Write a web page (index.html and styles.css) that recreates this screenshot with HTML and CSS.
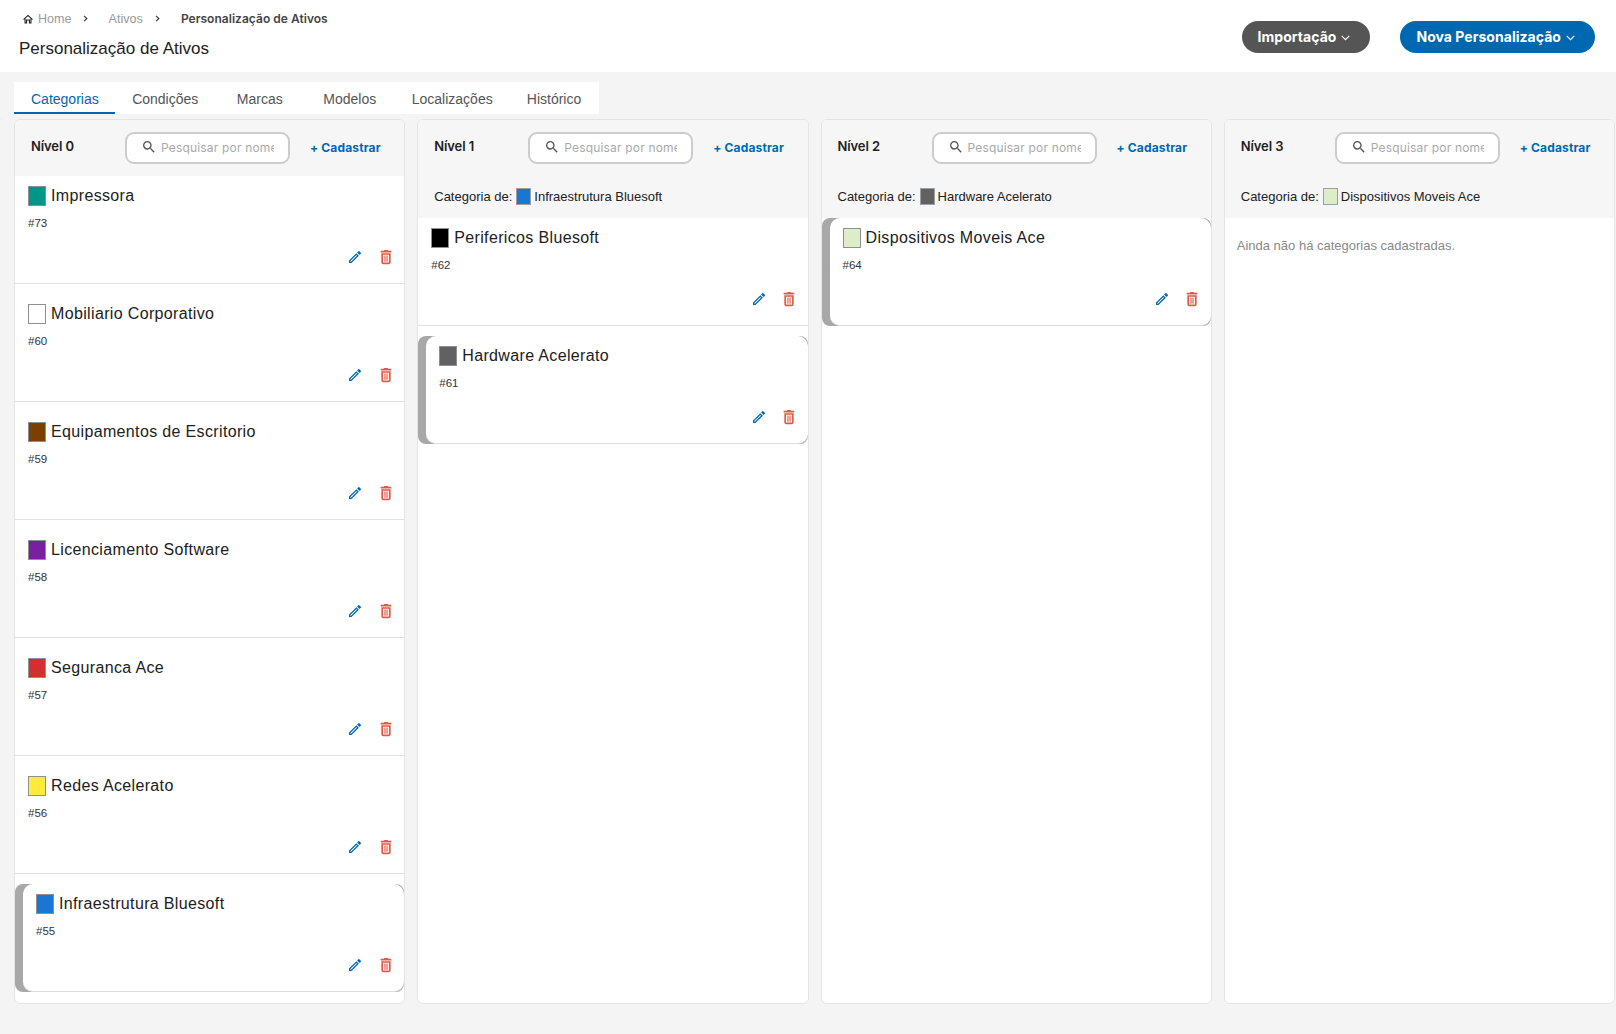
FILE: index.html
```html
<!DOCTYPE html>
<html lang="pt-BR">
  <head>
    <meta charset="UTF-8" />
    <title>Personalização de Ativos</title>
    <link rel="stylesheet" href="styles.css">
  </head>
  <body>
    <svg class="icon-defs" width="0" height="0">
      <symbol id="i-edit" viewBox="0 0 24 24"><path d="M3 17.25V21h3.75L17.81 9.94l-3.75-3.75L3 17.25zM5.92 19H5v-.92l9.06-9.06.92.92L5.92 19zM20.71 7.04a1 1 0 0 0 0-1.41l-2.34-2.34a1 1 0 0 0-1.41 0l-1.83 1.83 3.75 3.75 1.83-1.83z"/></symbol>
      <symbol id="i-trash" viewBox="0 0 24 24"><path d="M15.5 2.5l-1-1h-5l-1 1H4v2.6h16V2.5h-4.5zM5 6.2V20c0 1.66 1.34 3 3 3h8c1.66 0 3-1.34 3-3V6.2H5zm11.4 14H7.6V8.8h8.8v11.4zM9.6 9.8h1.7v9.2H9.6zm3.1 0h1.7v9.2h-1.7z"/></symbol>
      <symbol id="i-search" viewBox="0 0 24 24"><path d="M15.5 14h-.79l-.28-.27A6.47 6.47 0 0 0 16 9.5 6.5 6.5 0 1 0 9.5 16c1.61 0 3.09-.59 4.23-1.57l.27.28v.79l5 4.99L20.49 19l-4.99-5zm-6 0C7.01 14 5 11.99 5 9.5S7.01 5 9.5 5 14 7.01 14 9.5 11.99 14 9.5 14z"/></symbol>
      <symbol id="i-down" viewBox="0 0 24 24"><path d="M5 9l7 7 7-7" fill="none" stroke="currentColor" stroke-width="2.2"/></symbol>
      <symbol id="i-next" viewBox="0 0 24 24"><path d="M8 5l7.5 7L8 19" fill="none" stroke="currentColor" stroke-width="3"/></symbol>
    </svg>

    <header class="top-bar">
      <div class="top-left">
        <nav class="crumbs">
          <svg class="home-icon" viewBox="0 0 24 24"><path d="M12 3.5L1.5 12.8H5V21h5.2v-6h3.6v6H19v-8.2h3.5L12 3.5zM16.8 18.8h-.8v-6H8v6h-.8v-8.2L12 6.4l4.8 4.2z"/></svg>
          <span class="crumb crumb-home">Home</span>
          <svg class="crumb-sep"><use href="#i-next"/></svg>
          <span class="crumb crumb-mid">Ativos</span>
          <svg class="crumb-sep"><use href="#i-next"/></svg>
          <span class="crumb-current">Personalização de Ativos</span>
        </nav>
        <h1 class="page-title">Personalização de Ativos</h1>
      </div>
      <div class="top-actions">
        <button class="pill-btn pill-gray">Importação <svg class="pill-caret"><use href="#i-down"/></svg></button>
        <button class="pill-btn pill-blue">Nova Personalização <svg class="pill-caret"><use href="#i-down"/></svg></button>
      </div>
    </header>

    <div class="tabs">
      <div class="tab active">Categorias</div>
      <div class="tab">Condições</div>
      <div class="tab">Marcas</div>
      <div class="tab">Modelos</div>
      <div class="tab">Localizações</div>
      <div class="tab">Histórico</div>
    </div>

    <main class="levels">
      <section class="level">
        <div class="level-head">
          <div class="level-tools">
            <strong class="level-name">Nível 0</strong>
            <label class="search"><svg class="search-icon"><use href="#i-search"/></svg><input placeholder="Pesquisar por nome" /></label>
            <a class="add-link">+ Cadastrar</a>
          </div>
        </div>
        <div class="level-list">
          <article class="row">
            <div class="row-title"><span class="swatch c-teal"></span>Impressora</div>
            <div class="row-id">#73</div>
            <div class="row-actions"><svg class="act-edit"><use href="#i-edit"/></svg><svg class="act-trash"><use href="#i-trash"/></svg></div>
          </article>
          <article class="row">
            <div class="row-title"><span class="swatch c-white"></span>Mobiliario Corporativo</div>
            <div class="row-id">#60</div>
            <div class="row-actions"><svg class="act-edit"><use href="#i-edit"/></svg><svg class="act-trash"><use href="#i-trash"/></svg></div>
          </article>
          <article class="row">
            <div class="row-title"><span class="swatch c-brown"></span>Equipamentos de Escritorio</div>
            <div class="row-id">#59</div>
            <div class="row-actions"><svg class="act-edit"><use href="#i-edit"/></svg><svg class="act-trash"><use href="#i-trash"/></svg></div>
          </article>
          <article class="row">
            <div class="row-title"><span class="swatch c-purple"></span>Licenciamento Software</div>
            <div class="row-id">#58</div>
            <div class="row-actions"><svg class="act-edit"><use href="#i-edit"/></svg><svg class="act-trash"><use href="#i-trash"/></svg></div>
          </article>
          <article class="row">
            <div class="row-title"><span class="swatch c-red"></span>Seguranca Ace</div>
            <div class="row-id">#57</div>
            <div class="row-actions"><svg class="act-edit"><use href="#i-edit"/></svg><svg class="act-trash"><use href="#i-trash"/></svg></div>
          </article>
          <article class="row">
            <div class="row-title"><span class="swatch c-yellow"></span>Redes Acelerato</div>
            <div class="row-id">#56</div>
            <div class="row-actions"><svg class="act-edit"><use href="#i-edit"/></svg><svg class="act-trash"><use href="#i-trash"/></svg></div>
          </article>
          <article class="row-selected">
            <div class="row selected-body">
              <div class="row-title"><span class="swatch c-blue"></span>Infraestrutura Bluesoft</div>
              <div class="row-id">#55</div>
              <div class="row-actions"><svg class="act-edit"><use href="#i-edit"/></svg><svg class="act-trash"><use href="#i-trash"/></svg></div>
            </div>
          </article>
        </div>
      </section>

      <section class="level">
        <div class="level-head tall">
          <div class="level-tools">
            <strong class="level-name">Nível 1</strong>
            <label class="search"><svg class="search-icon"><use href="#i-search"/></svg><input placeholder="Pesquisar por nome" /></label>
            <a class="add-link">+ Cadastrar</a>
          </div>
          <div class="parent-line">Categoria de: <span class="swatch-sm c-blue"></span> Infraestrutura Bluesoft</div>
        </div>
        <div class="level-list">
          <article class="row">
            <div class="row-title"><span class="swatch c-black"></span>Perifericos Bluesoft</div>
            <div class="row-id">#62</div>
            <div class="row-actions"><svg class="act-edit"><use href="#i-edit"/></svg><svg class="act-trash"><use href="#i-trash"/></svg></div>
          </article>
          <article class="row-selected">
            <div class="row selected-body">
              <div class="row-title"><span class="swatch c-gray"></span>Hardware Acelerato</div>
              <div class="row-id">#61</div>
              <div class="row-actions"><svg class="act-edit"><use href="#i-edit"/></svg><svg class="act-trash"><use href="#i-trash"/></svg></div>
            </div>
          </article>
        </div>
      </section>

      <section class="level">
        <div class="level-head tall">
          <div class="level-tools">
            <strong class="level-name">Nível 2</strong>
            <label class="search"><svg class="search-icon"><use href="#i-search"/></svg><input placeholder="Pesquisar por nome" /></label>
            <a class="add-link">+ Cadastrar</a>
          </div>
          <div class="parent-line">Categoria de: <span class="swatch-sm c-gray"></span> Hardware Acelerato</div>
        </div>
        <div class="level-list">
          <article class="row-selected">
            <div class="row selected-body">
              <div class="row-title"><span class="swatch c-green"></span>Dispositivos Moveis Ace</div>
              <div class="row-id">#64</div>
              <div class="row-actions"><svg class="act-edit"><use href="#i-edit"/></svg><svg class="act-trash"><use href="#i-trash"/></svg></div>
            </div>
          </article>
        </div>
      </section>

      <section class="level">
        <div class="level-head tall">
          <div class="level-tools">
            <strong class="level-name">Nível 3</strong>
            <label class="search"><svg class="search-icon"><use href="#i-search"/></svg><input placeholder="Pesquisar por nome" /></label>
            <a class="add-link">+ Cadastrar</a>
          </div>
          <div class="parent-line">Categoria de: <span class="swatch-sm c-green"></span> Dispositivos Moveis Ace</div>
        </div>
        <div class="level-list">
          <p class="empty-msg">Ainda não há categorias cadastradas.</p>
        </div>
      </section>
    </main>
  </body>
</html>
```

FILE: styles.css
```css
* {
  margin: 0;
  padding: 0;
  box-sizing: border-box;
}
html,
body {
  height: 100%;
  overflow: hidden;
}
body {
  font-family: "Liberation Sans", Arial, sans-serif;
  background: #f4f4f4;
  color: #212121;
}
.icon-defs {
  position: absolute;
}

/* top bar */
.top-bar {
  height: 72px;
  background: #fff;
  display: flex;
  justify-content: space-between;
  align-items: flex-start;
  padding: 0 21px 0 19px;
}
.crumbs {
  height: 19px;
  margin-top: 9px;
  padding-left: 3px;
  display: flex;
  align-items: center;
  font-size: 12.6px;
}
.home-icon {
  width: 12px;
  height: 12px;
  fill: #222;
  margin-right: 4px;
}
.crumb {
  color: #9a9a9a;
}
.crumb-sep {
  width: 9px;
  height: 9px;
  color: #333;
  flex-shrink: 0;
}
.crumb-home {
  margin-right: 9px;
}
.crumb-mid {
  margin: 0 10px 0 19px;
}
.crumb-current {
  font-family: Inter, sans-serif;
  font-size: 12px;
  font-weight: 600;
  letter-spacing: 0.03px;
  color: #444;
  margin-left: 19px;
}
.page-title {
  font-size: 17px;
  font-weight: 400;
  margin-top: 11px;
  line-height: 20px;
}
.top-actions {
  display: flex;
  gap: 30px;
  margin-top: 21px;
}
.pill-btn {
  height: 32px;
  border: none;
  border-radius: 16px;
  color: #fff;
  font-family: Inter, sans-serif;
  font-size: 14px;
  font-weight: 700;
  letter-spacing: 0.04px;
  padding: 0 18px 2px 16px;
  display: flex;
  align-items: center;
  gap: 3px;
}
.pill-gray {
  background: #555;
}
.pill-blue {
  background: #0067b1;
}
.pill-caret {
  width: 13px;
  height: 13px;
  margin-top: 2px;
}

/* tabs */
.tabs {
  display: flex;
  width: 585px;
  height: 32px;
  margin: 10px 0 5px 14px;
  background: #fff;
}
.tab {
  min-width: 90px;
  padding: 0 17px;
  text-align: center;
  font-size: 14px;
  line-height: 34px;
  color: #555;
}
.tab.active {
  color: #0067b1;
  border-bottom: 2px solid #0067b1;
}

/* level columns */
.levels {
  display: grid;
  grid-template-columns: repeat(4, 1fr);
  gap: 12px;
  padding: 0 1px 0 14px;
  height: 885px;
}
.level {
  background: #fff;
  border: 1px solid #e4e4e4;
  border-radius: 6px;
  overflow: hidden;
  display: flex;
  flex-direction: column;
}
.level-head {
  background: #f6f6f6;
  height: 55.5px;
  flex-shrink: 0;
  padding-left: 16px;
}
.level-head.tall {
  height: 98px;
}
.level-tools {
  display: flex;
  align-items: center;
  height: 32px;
  margin-top: 12px;
}
.level-name {
  width: 94px;
  font-family: Inter, sans-serif;
  font-size: 13px;
  font-weight: 600;
  letter-spacing: -0.1px;
  position: relative;
  top: -2px;
}
.search {
  width: 165px;
  height: 32px;
  background: #fff;
  border: 2px solid #ccc;
  border-radius: 9px;
  display: flex;
  align-items: center;
  padding: 0 14px 2px 14px;
}
.search-icon {
  width: 16px;
  height: 16px;
  fill: #555;
  flex-shrink: 0;
  margin-right: 4px;
}
.search input {
  width: 100%;
  min-width: 0;
  border: none;
  outline: none;
  font-family: Inter, sans-serif;
  font-size: 12px;
  letter-spacing: 0.18px;
}
.search input::placeholder {
  color: #aaa;
}
.add-link {
  margin-left: 20px;
  font-family: Inter, sans-serif;
  font-size: 12px;
  font-weight: 700;
  letter-spacing: 0.15px;
  color: #0067b1;
  position: relative;
  top: -1px;
}
.parent-line {
  display: flex;
  align-items: center;
  gap: 4px;
  margin-top: 24px;
  font-size: 13px;
  line-height: 16px;
}
.swatch-sm {
  width: 15px;
  height: 17px;
  margin-right: -1px;
  border: 1px solid #9aa0a6;
}

/* rows */
.level-list {
  flex: 1;
  overflow: hidden;
}
.row {
  height: 108.05px;
  padding: 10px 10.5px 10px 13px;
  margin-bottom: 10px;
  border-bottom: 1px solid #e2e2e2;
  background: #fff;
  display: flex;
  flex-direction: column;
}
.row-selected {
  height: 108px;
  padding-left: 8px;
  background: #a8a8a8;
  border-radius: 8px;
  margin-bottom: 10px;
}
.selected-body {
  height: 100%;
  margin: 0;
  border-radius: 10px;
  border-bottom: 1px solid #dcdce0;
}
.row-title {
  display: flex;
  align-items: center;
  gap: 5px;
  font-size: 16px;
  letter-spacing: 0.35px;
  line-height: 20px;
}
.swatch {
  width: 18px;
  height: 20px;
  border: 1px solid #8c8f94;
  flex-shrink: 0;
}
.row-id {
  margin-top: 10px;
  font-size: 11.5px;
  line-height: 14px;
  color: #333;
}
.row-actions {
  margin-top: auto;
  display: flex;
  justify-content: flex-end;
  align-items: center;
  gap: 14.5px;
  height: 16px;
  margin-bottom: 8px;
}
.row-actions svg {
  width: 16px;
  height: 16px;
}
.act-edit {
  fill: #0067b1;
}
.act-trash {
  fill: #e05a47;
}
.empty-msg {
  margin: 20px 0 0 12px;
  font-size: 13px;
  line-height: 16px;
  color: #888;
}

/* swatch colours */
.c-teal { background: #009688; }
.c-white { background: #fff; }
.c-brown { background: #7b3f00; }
.c-purple { background: #7b1fa2; }
.c-red { background: #d32f2f; }
.c-yellow { background: #ffeb3b; }
.c-blue { background: #1976d2; }
.c-black { background: #000; }
.c-gray { background: #616161; }
.c-green { background: #dcedc8; }
```
